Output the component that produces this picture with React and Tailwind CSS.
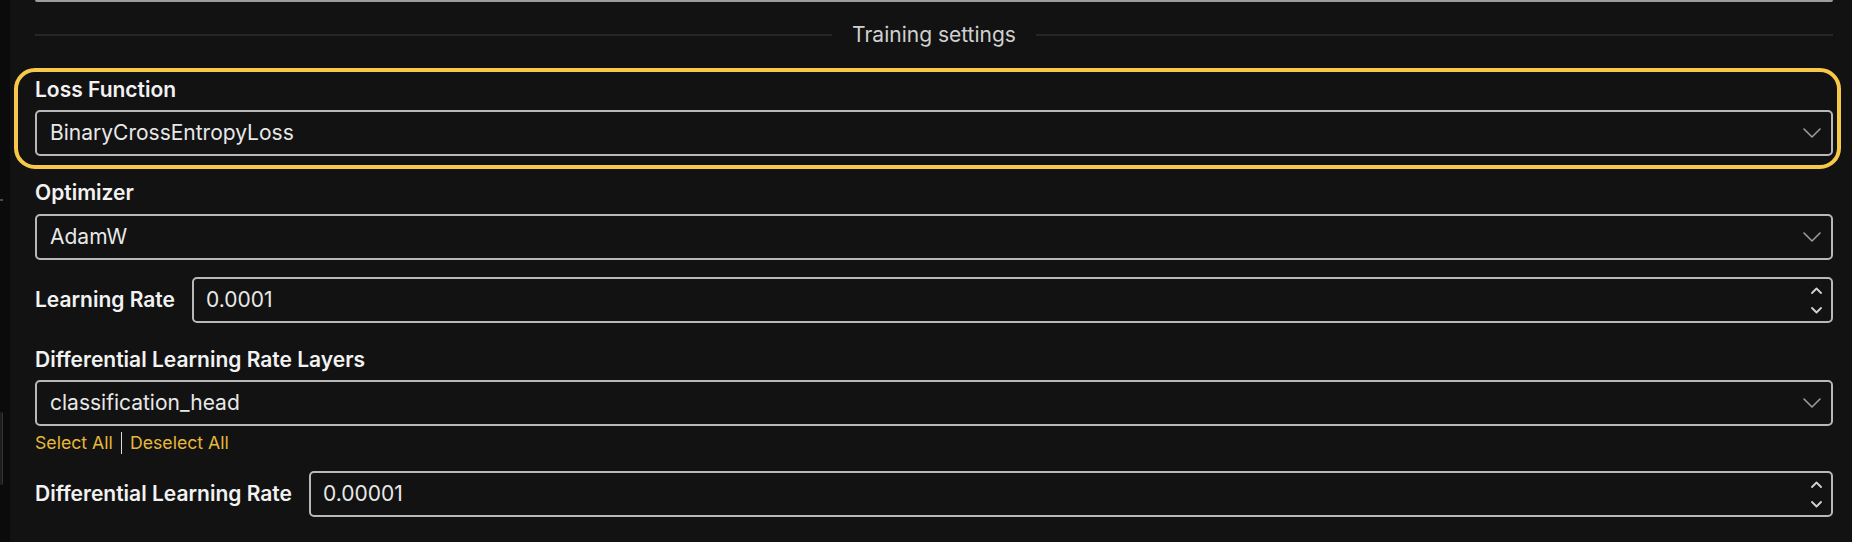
import React from "react";

function SelectChevron() {
  return (
    <svg width="18" height="10" viewBox="0 0 18 10" fill="none">
      <polyline points="1,1 9,9 17,1" stroke="#9c9c9c" strokeWidth="1.6" strokeLinecap="round" strokeLinejoin="round" />
    </svg>
  );
}

function Spinner() {
  return (
    <div className="flex flex-col items-center gap-[13px]">
      <svg width="11" height="7" viewBox="0 0 11 7" fill="none">
        <polyline points="1,6 5.5,1.5 10,6" stroke="#d2d2d2" strokeWidth="1.8" strokeLinecap="round" strokeLinejoin="round" />
      </svg>
      <svg width="11" height="7" viewBox="0 0 11 7" fill="none">
        <polyline points="1,1 5.5,5.5 10,1" stroke="#d2d2d2" strokeWidth="1.8" strokeLinecap="round" strokeLinejoin="round" />
      </svg>
    </div>
  );
}

function SelectBox({ value }) {
  return (
    <div className="h-[46px] border-2 border-[#b8b8b8] rounded-[5px] pl-[13px] pr-[10px] flex items-center justify-between text-[21px] text-[#e8e8e8]">
      <span>{value}</span>
      <SelectChevron />
    </div>
  );
}

function NumberBox({ value }) {
  return (
    <div className="flex-1 h-[46px] border-2 border-[#b8b8b8] rounded-[5px] pl-[12px] pr-[9px] flex items-center justify-between text-[21px] text-[#e8e8e8]">
      <span>{value}</span>
      <Spinner />
    </div>
  );
}

function Label({ children }) {
  return <div className="text-[21px] leading-[24px] font-semibold text-[#f2f2f2] whitespace-nowrap">{children}</div>;
}

export default function App() {
  return (
    <div className="flex w-[1852px] h-[542px] bg-[#121212] overflow-hidden font-['Inter',sans-serif]">
      <div className="w-[10px] shrink-0 bg-[#0b0b0b] flex flex-col">
        <div className="h-[199px]" />
        <div className="h-[2px] w-[3px] bg-[#4a4a4a]" />
        <div className="h-[211px]" />
        <div className="h-[73px] w-[3px] bg-[#1d1d1d] border-r border-[#343434] rounded-r-[2px]" />
      </div>
      <div className="flex-1 pl-[25px] pr-[19px] flex flex-col">
        <div className="h-[2px] bg-[#9d9d9d] rounded-b-[2px]" />
        <div className="mt-[21px] h-[24px] flex items-center">
          <div className="flex-1 h-[2px] bg-[#262626]" />
          <div className="px-5 text-[21px] leading-[24px] text-[#d0d0d0]">Training settings</div>
          <div className="flex-1 h-[2px] bg-[#262626]" />
        </div>

        <div className="mt-[21px] -ml-[21px] -mr-[8px] border-4 border-[#f8c948] rounded-[21px] pl-[17px] pr-[4px] pt-[6px] pb-[9px]">
          <Label>Loss Function</Label>
          <div className="mt-[8px]">
            <SelectBox value="BinaryCrossEntropyLoss" />
          </div>
        </div>

        <div className="mt-[12px]">
          <Label>Optimizer</Label>
          <div className="mt-[9px]">
            <SelectBox value="AdamW" />
          </div>
        </div>

        <div className="mt-[17px] flex items-center gap-[17px]">
          <Label>Learning Rate</Label>
          <NumberBox value="0.0001" />
        </div>

        <div className="mt-[25px]">
          <Label>Differential Learning Rate Layers</Label>
          <div className="mt-[8px]">
            <SelectBox value="classification_head" />
          </div>
        </div>

        <div className="mt-[7px] h-[20px] flex items-center text-[17.7px] leading-[20px] text-[#e6b83a]">
          <span>Select All</span>
          <span className="mx-[8px] w-px h-[22px] bg-[#dcdcdc]" />
          <span>Deselect All</span>
        </div>

        <div className="mt-[18px] flex items-center gap-[17px]">
          <Label>Differential Learning Rate</Label>
          <NumberBox value="0.00001" />
        </div>
      </div>
    </div>
  );
}
